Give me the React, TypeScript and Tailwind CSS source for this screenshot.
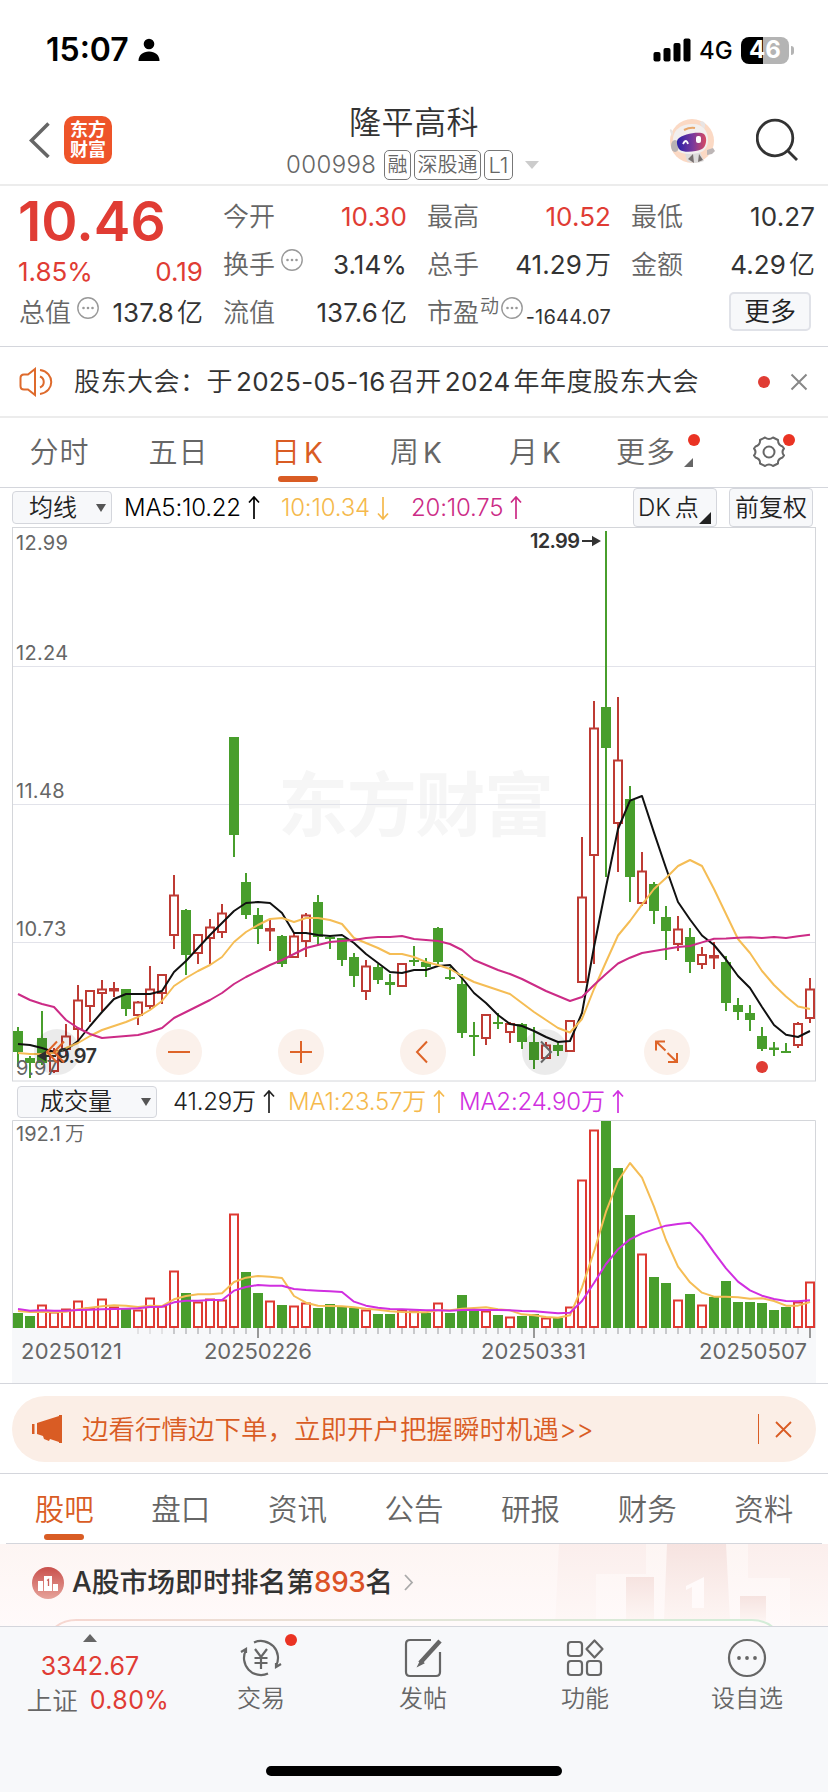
import type { ReactNode } from 'react';
import clsx from 'clsx';

type Tone = 'r' | 'g';
type Candle = [high: number, top: number, bottom: number, low: number, tone: Tone];

const RED = '#be3b34';
const GREEN = '#489e2c';

// Candles in chart space, one every 12px
const candles: Candle[] = [
  [1027, 1031, 1052, 1067, 'g'], [1056, 1058, 1063, 1078, 'g'], [1011, 1038, 1063, 1065, 'g'],
  [1048, 1051, 1071, 1073, 'r'], [1024, 1036, 1049, 1056, 'r'], [985, 1000, 1029, 1042, 'r'],
  [990, 990.5, 1006, 1022, 'r'], [980, 989, 993, 1011, 'r'], [982, 989, 991, 997, 'r'],
  [989, 989, 1009, 1016, 'g'], [1001, 1002, 1015, 1025, 'r'], [966, 989, 1006, 1009, 'r'],
  [974, 974.5, 993, 1004, 'r'], [875, 895, 935, 949, 'r'], [909, 910, 955, 975, 'g'],
  [934, 934.5, 953, 964, 'r'], [919, 927, 938, 964, 'r'], [904, 913, 932, 938, 'r'],
  [737, 737, 835, 857, 'g'], [873, 882, 915, 919, 'g'], [908, 915, 929, 944, 'g'],
  [920, 929, 931, 951, 'r'], [935, 936, 964, 967, 'g'], [932, 936, 957, 958, 'r'],
  [913, 915, 941, 957, 'r'], [895, 902, 937, 945, 'g'], [935, 937, 939, 949, 'g'],
  [938, 938, 960, 966, 'g'], [953, 957, 976, 987, 'g'], [960, 966, 991, 1000, 'r'],
  [964, 967, 980, 984, 'g'], [974, 982, 985, 995, 'g'], [963, 963.5, 986, 987, 'r'],
  [946, 960, 962, 966, 'g'], [958, 962, 967, 977, 'g'], [927, 928, 962, 965, 'g'],
  [967, 977, 979, 980, 'g'], [974, 984, 1033, 1038, 'g'], [1022, 1035, 1037, 1056, 'g'],
  [1014, 1014.5, 1038, 1045, 'r'], [1013, 1022, 1024, 1029, 'g'], [1022, 1023.5, 1032, 1043, 'r'],
  [1023, 1024, 1042, 1049, 'g'], [1027, 1042, 1060, 1069, 'g'], [1042, 1045, 1058, 1059, 'r'],
  [1043, 1045, 1051, 1056, 'g'], [1020, 1020.5, 1051, 1051, 'r'], [837, 897, 982, 983, 'r'],
  [701, 728, 855, 964, 'r'], [531, 707, 748, 877, 'g'], [697, 760, 823, 872, 'r'],
  [786, 799, 877, 902, 'g'], [852, 871, 903, 906, 'r'], [882, 884, 911, 924, 'g'],
  [906, 917, 931, 960, 'g'], [916, 929, 944, 951, 'r'], [928, 937, 962, 973, 'g'],
  [947, 954.5, 964, 969, 'r'], [942, 956, 958, 969, 'r'], [956, 962, 1003, 1011, 'g'],
  [998, 1005, 1012, 1020, 'g'], [1005, 1013, 1020, 1031, 'g'], [1027, 1036, 1049, 1051, 'g'],
  [1042, 1047.5, 1050, 1056, 'g'], [1043, 1051, 1053, 1053, 'g'], [1022, 1023.5, 1045, 1048, 'r'],
  [978, 989, 1018, 1023, 'r'],
];

const ma5 = [
  1044, 1045, 1048, 1052, 1050, 1041, 1026, 1012, 999, 994, 994, 994, 991, 972, 961, 948, 935, 923, 911, 903,
  902, 903, 913, 933, 933, 935, 936, 935, 943, 954, 963, 972, 973, 970, 970, 966, 965, 978, 993, 1003,
  1015, 1024, 1026, 1031, 1037, 1042, 1041, 1013, 947, 887, 829, 800.6, 796, 832.6, 868, 902, 919.5, 935.5, 945, 959.5,
  976, 988, 1007, 1025, 1034.7, 1037, 1031,
];
const ma10 = [
  1053, 1054, 1054, 1053, 1048, 1043, 1036, 1030, 1026, 1022, 1017, 1010, 1001, 986, 978, 971, 965, 957, 942, 932,
  925, 919, 918, 922, 918, 918, 920, 924, 938, 943, 948, 954, 954, 957, 962, 965, 969, 976, 982, 986,
  990, 994, 1003, 1012, 1020, 1028, 1032.5, 1019, 989, 962, 935.5, 921, 904.6, 889, 878, 866, 860, 866, 889, 914,
  939, 953, 971, 985, 996.5, 1006.4, 1009,
];
const ma20 = [
  994, 1000, 1004, 1007, 1020, 1028, 1034, 1038, 1037, 1036, 1035, 1032, 1028, 1018, 1012, 1006, 1000, 993, 984, 977,
  971, 965, 960, 954, 948, 945, 942, 941, 940, 938, 937, 937, 936, 939, 940, 941, 944, 950, 960, 965,
  970, 974, 979, 985, 991, 996, 1001, 997, 985, 974, 963.5, 957.7, 953, 951, 949, 947, 946, 942.4, 938.8, 938.4,
  937.7, 937.2, 938, 937, 938, 936.3, 934.7,
];

const volumes = [
  1313, 1316, 1305, 1312, 1309, 1301, 1308, 1299, 1307, 1309, 1310, 1298, 1306, 1271, 1293, 1302, 1299, 1300, 1214, 1272,
  1293, 1301, 1305, 1306, 1303, 1308, 1304, 1307, 1308, 1310, 1314, 1314, 1310, 1311, 1313, 1303, 1313, 1295, 1311, 1311,
  1315, 1317, 1316, 1314, 1318, 1318, 1307, 1180, 1130, 1121, 1168, 1215, 1254, 1277, 1283, 1300, 1294, 1305, 1297, 1281,
  1302, 1302, 1303, 1310, 1307, 1302, 1282,
];
const volumeTones = 'ggrrrrrrrgrrrrgrrrrggrgrrggggrggrrgrgggrgrggrgrrrgggrggrgrgggggggrr';
// Volume averages are kept at 3x for sub-pixel precision
const volMa1 = [
  693, 696, 695, 697, 695, 688, 683, 679, 676, 677, 681, 677, 678, 658, 648, 643, 643, 640, 606, 593,
  588, 590, 594, 648, 668, 677, 678, 679, 682, 686, 689, 694, 696, 697, 697, 691, 691, 686, 684, 682,
  688, 691, 703, 706, 711, 713, 706, 622, 515, 395, 303, 249, 293, 380, 480, 560, 607, 638, 650, 650,
  652, 656, 655, 663, 677, 677, 666,
].map((v) => 1080 + v / 3);
const volMa2 = [
  687, 692, 691, 692, 692, 690, 689, 688, 687, 686, 685, 681, 680, 667, 662, 662, 660, 660, 632, 621,
  615, 617, 617, 627, 630, 632, 634, 636, 665, 677, 683, 687, 688, 689, 691, 691, 692, 690, 689, 690,
  690, 691, 693, 694, 697, 700, 698, 663, 609, 552, 508, 478, 460, 448, 437, 432, 428, 466, 517, 565,
  605, 631, 647, 657, 663, 664, 661,
].map((v) => 1080 + v / 3);

const cx = (i: number) => 18 + i * 12;
const toPoints = (ys: number[]) => ys.map((y, i) => `${cx(i)},${y}`).join(' ');

function Line({ values, color }: { values: number[]; color: string }) {
  return <polyline points={toPoints(values)} fill="none" stroke={color} strokeWidth="2" strokeLinejoin="round" />;
}

function StatusBar() {
  return (
    <div className="flex h-[100px] items-center pl-[46px] pr-[34px] text-black">
      <span className="w-[92px] text-[32px] font-semibold leading-none">15:07</span>
      <svg width="22" height="24" viewBox="0 0 22 24">
        <circle cx="11" cy="6" r="5.3" />
        <path d="M0.5 23c0-6 4.5-9.500 10.500-9.500s10.500 3.500 10.500 9.500z" />
      </svg>
      <svg className="ml-auto" width="38" height="24" viewBox="0 0 38 24">
        <rect x="0.500" y="14" width="7" height="9.500" rx="2" />
        <rect x="10.500" y="10" width="7" height="13.500" rx="2" />
        <rect x="20.500" y="5" width="7" height="18.500" rx="2" />
        <rect x="30.500" y="0.500" width="7" height="23" rx="2" />
      </svg>
      <span className="ml-[8px] w-[42px] pt-[2px] text-[24px] font-medium leading-none">4G</span>
      <div className="flex h-[27px] w-[48px] items-center justify-center rounded-[8px] bg-[linear-gradient(90deg,#000_46%,#b4b4b4_46%)] text-[24px] font-bold leading-none text-white">
        46
      </div>
      <div className="ml-[2px] h-[9px] w-[3px] rounded-r-full bg-[#b4b4b4]" />
    </div>
  );
}

function Robot() {
  return (
    <svg width="48" height="48" viewBox="0 0 48 48">
      <defs>
        <linearGradient id="visor" x1="0" x2="1">
          <stop offset="0" stopColor="#2a1fa8" />
          <stop offset="0.55" stopColor="#7a3a9c" />
          <stop offset="1" stopColor="#d84a62" />
        </linearGradient>
      </defs>
      <circle cx="24" cy="24" r="22" fill="#fbd9c4" />
      <path d="M17 36l15-1 4 9q-10 4-17 0z" fill="#dedcdc" />
      <path d="M20 42l5-5 1 9zM31 37l4 6-5 2z" fill="#77706f" />
      <path d="M5 16c0-4-4-5-3-2l2 6zM32 6c0-3 6-2 5 3l-1 4z" fill="#e8e4e3" />
      <path d="M5 25C4 12 14 7 25 7c10 0 15 7 15 16 0 11-8 14-18 14C11 37 6 33 5 25z" fill="#f2efee" />
      <ellipse cx="7" cy="29" rx="4" ry="6" fill="#b9b3b3" />
      <path d="M39 33l6-2 2 3-3 3-5 1z" fill="#bdb6b6" />
      <path d="M10 22c4-5 22-8 26-5 4 4 2 13-2 15-6 3-18 4-22 1-3-3-4-9-2-11z" fill="url(#visor)" />
      <path d="M15 27q3-6 5 0" fill="none" stroke="#fff" strokeWidth="1.800" />
      <rect x="28" y="19" width="5" height="7" rx="2" fill="#fff" />
      <path d="M16 13q6-3 11-2" stroke="#e8a66a" strokeWidth="2" fill="none" />
    </svg>
  );
}

function Tag({ children, className }: { children: ReactNode; className: string }) {
  return (
    <span className={clsx('flex h-[30px] items-center justify-center rounded-[5px] border border-[#777] text-[20px] leading-none', className)}>
      {children}
    </span>
  );
}

function Header() {
  return (
    <header className="flex h-[86px] border-b-2 border-[#ececec] pl-[28px] pr-[28px]">
      <div className="flex w-[240px] items-start pt-[16px]">
        <svg className="mt-[6px]" width="24" height="36" viewBox="0 0 24 36" fill="none" stroke="#666" strokeWidth="3.500">
          <path d="M20.500 1.500L3.500 18.500 20.500 35" />
        </svg>
        <div className="ml-[12px] flex h-[48px] w-[48px] flex-col items-center justify-center rounded-[10px] bg-[#ee5429] text-[18px] font-bold leading-[20px] text-white">
          <span>东方</span>
          <span>财富</span>
        </div>
      </div>
      <div className="flex flex-1 flex-col items-start">
        <h1 className="ml-[81px] mt-[7px] text-[32px] font-[350] leading-[32px] tracking-[0.5px] text-[#333]">隆平高科</h1>
        <div className="mt-[11px] flex items-center pl-[18px] font-[350] text-[#666]">
          <span className="w-[98px] text-[24px] leading-none tracking-[0.4px]">000998</span>
          <Tag className="w-[27px]">融</Tag>
          <Tag className="ml-[3px] w-[67px]">深股通</Tag>
          <Tag className="ml-[3px] w-[29px] text-[22px]">L1</Tag>
          <span className="ml-[12px] border-x-[7px] border-t-[8px] border-x-transparent border-t-[#ccc]" />
        </div>
      </div>
      <div className="flex items-start pt-[17px]">
        <Robot />
        <svg className="ml-[40px]" width="44" height="44" viewBox="0 0 44 44" fill="none" stroke="#333" strokeWidth="2.800">
          <circle cx="19" cy="21" r="17.800" />
          <path d="M31.500 33.500L41 43" />
        </svg>
      </div>
    </header>
  );
}

function Dots() {
  return (
    <svg className="mb-[10px] ml-[6px] shrink-0" width="22" height="22" viewBox="0 0 22 22" fill="#999">
      <circle cx="11" cy="11" r="10.200" fill="none" stroke="#999" strokeWidth="1.400" />
      <circle cx="6.500" cy="11" r="1.300" />
      <circle cx="11" cy="11" r="1.300" />
      <circle cx="15.500" cy="11" r="1.300" />
    </svg>
  );
}

function Stat({ label, value, unit, up, info }: { label: string; value: string; unit?: string; up?: boolean; info?: boolean }) {
  return (
    <div className="flex h-[48px] items-center whitespace-nowrap text-[26px] font-[350] leading-none">
      <span className="text-[#666]">{label}</span>
      {info && <Dots />}
      <span className={clsx('ml-auto', up ? 'text-[#e03c34]' : 'text-[#333]')}>
        <span className="font-[380] tracking-[0.1px]">{value}</span>
        {unit && <span className="ml-[3px]">{unit}</span>}
      </span>
    </div>
  );
}

function Quote() {
  return (
    <section className="grid h-[161px] grid-cols-4 gap-x-[20px] border-b border-[#d4d6dc] pl-[19px] pr-[13px] pt-[7px]">
      <div>
        <div className="-ml-px h-[60px] pt-[4px] text-[55px] font-semibold leading-[48px] tracking-[0.1px] text-[#e03c34]">10.46</div>
        <div className="-ml-px flex h-[38px] items-center justify-between text-[26px] font-[380] leading-none text-[#e03c34]">
          <span>1.85%</span>
          <span>0.19</span>
        </div>
        <div className="-mt-[2px]">
          <Stat label="总值" value="137.8" unit="亿" info />
        </div>
      </div>
      <div>
        <Stat label="今开" value="10.30" up />
        <Stat label="换手" value="3.14%" info />
        <Stat label="流值" value="137.6" unit="亿" />
      </div>
      <div>
        <Stat label="最高" value="10.52" up />
        <Stat label="总手" value="41.29" unit="万" />
        <div className="flex h-[48px] items-center whitespace-nowrap text-[26px] font-[350] leading-none">
          <span className="text-[#666]">市盈</span>
          <span className="mb-[14px] ml-px text-[19px] text-[#666]">动</span>
          <span className="-ml-[4px] flex">
            <Dots />
          </span>
          <span className="ml-auto mt-[8px] text-[20px] font-[380] tracking-[0.2px] text-[#333]">-1644.07</span>
        </div>
      </div>
      <div>
        <Stat label="最低" value="10.27" />
        <Stat label="金额" value="4.29" unit="亿" />
        <div className="flex h-[44px] items-center justify-end pr-[4px]">
          <button className="h-[39px] w-[82px] rounded-[5px] border-2 border-[#e0e2e8] bg-[#f7f8fa] pt-px text-[26px] font-[350] leading-none text-[#222]">更多</button>
        </div>
      </div>
    </section>
  );
}

function Notice() {
  return (
    <section className="flex h-[71px] items-center border-b-2 border-[#ececec] pl-[19px] pr-[20px]">
      <svg width="36" height="30" viewBox="0 0 36 30" fill="none" stroke="#de6a2c" strokeWidth="2">
        <path d="M16 2v26l-7-5.500H5q-3.500 0-3.500-3.500V11q0-3.500 3.500-3.500h4z" />
        <path d="M21 9.500c5 2 5 9 0 11" />
        <path d="M21 3c15 2 15 22 0 24" />
      </svg>
      <p className="ml-[19px] whitespace-nowrap text-[26px] font-[350] leading-none tracking-[0.5px] text-[#333]">
        股东大会：于<span className="mx-[3px] font-[380] tracking-[0.3px]">2025-05-16</span>召开<span className="mx-[3px] font-[380] tracking-[0.3px]">2024</span>年年度股东大会
      </p>
      <span className="ml-auto h-3 w-3 rounded-full bg-[#e03c34]" />
      <svg className="ml-[20px]" width="18" height="18" viewBox="0 0 18 18" stroke="#888" strokeWidth="2">
        <path d="M1.500 1.500l15 15M16.500 1.500l-15 15" />
      </svg>
    </section>
  );
}

function PeriodTabs() {
  const tabs = ['分时', '五日', '日K', '周K', '月K'];
  return (
    <nav className="flex h-[70px] border-b border-[#d4d6dc] text-[29px] font-[350] leading-none tracking-[1px] text-[#666]">
      {tabs.map((tab) => (
        <div key={tab} className={clsx('flex w-[119px] flex-col items-center pt-[20px]', tab === '日K' && 'text-[#d95c24]')}>
          <span className="h-[38px]">
            {tab[0]}
            <span className={clsx(tab[1] === 'K' && 'ml-[3px] text-[28px] font-[400]')}>{tab[1]}</span>
          </span>
          {tab === '日K' && <span className="h-[6px] w-[40px] rounded-full bg-[#d95c24]" />}
        </div>
      ))}
      <div className="relative flex w-[110px] pl-[21px] pt-[20px]">
        更多
        <span className="absolute left-[93px] top-[16px] h-3 w-3 rounded-full bg-[#ea3323]" />
        <svg className="absolute left-[89px] top-[40px]" width="9" height="9" fill="#666">
          <path d="M9 0v9H0z" />
        </svg>
      </div>
      <div className="relative flex flex-1 pl-[47px] pt-[17px]">
        <svg width="34" height="34" viewBox="0 0 34 34" fill="none" stroke="#666" strokeWidth="2">
          <path d="M13 2.500q4 3 8 0l5 2.500q0 5 4.500 6.500l1.500 2q-3 3.500 0 7l-1.500 2q-5 1.500-4.500 6l-5 2.500q-4-3-8 0l-5-2.500q0.500-4.500-4.500-6l-1.500-2q3-3.500 0-7l1.500-2q5-1.500 4.500-6.500z" strokeLinejoin="round" />
          <circle cx="17" cy="17" r="5.500" />
        </svg>
        <span className="absolute left-[78px] top-[16px] h-3 w-3 rounded-full bg-[#ea3323]" />
      </div>
    </nav>
  );
}

function Arrow({ down }: { down?: boolean }) {
  return (
    <svg className={clsx('ml-[7px] inline-block', down && 'rotate-180')} width="12" height="24" viewBox="0 0 12 24" fill="none" stroke="currentColor" strokeWidth="1.700">
      <path d="M6 1v22M1 6.500L6 1l5 5.500" />
    </svg>
  );
}

function Indicator({ children, className, down }: { children: ReactNode; className: string; down?: boolean }) {
  return (
    <span className={clsx('flex shrink-0 items-center whitespace-nowrap text-[24px] font-[350] leading-none tracking-[-0.2px]', className)}>
      {children}
      <Arrow down={down} />
    </span>
  );
}

function PriceIndicators() {
  return (
    <div className="flex h-[39px] items-center pl-[12px] pr-[15px]">
      <button className="flex h-[33px] w-[100px] items-center justify-between rounded-[4px] border border-[#d4d6dc] bg-[#f7f8fa] pl-[16px] pr-[5px] text-[24px] font-[350] leading-none text-[#222]">
        均线
        <span className="border-x-[5px] border-t-[8px] border-x-transparent border-t-[#555]" />
      </button>
      <Indicator className="ml-[12px] w-[157px] text-black">MA5:10.22</Indicator>
      <Indicator className="w-[130px] text-[#f5b94c]" down>10:10.34</Indicator>
      <Indicator className="text-[#cc2b86]">20:10.75</Indicator>
      <button className="relative ml-auto h-[39px] w-[84px] rounded-[4px] border border-[#d4d6dc] bg-[#f7f8fa] pl-[4px] pt-px text-left text-[24px] font-[350] leading-none text-[#222]">
        DK<span className="ml-[4px]">点</span>
        <svg className="absolute bottom-[2px] right-[5px]" width="12" height="12" fill="#222">
          <path d="M12 0v12H0z" />
        </svg>
      </button>
      <button className="ml-[12px] h-[39px] w-[84px] whitespace-nowrap rounded-[4px] border border-[#d4d6dc] bg-[#f7f8fa] pt-px text-[24px] font-[350] leading-none text-[#222]">前复权</button>
    </div>
  );
}

function PriceChart() {
  const labels: [string, number][] = [['12.99', 550], ['12.24', 660], ['11.48', 798], ['10.73', 936], ['9.97', 1075]];
  return (
    <svg className="block" width="828" height="555" viewBox="0 527 828 555">
      <text x="278" y="831" fontSize="70" fontWeight="700" fill="#f6f6f6" textLength="276">东方财富</text>
      <g stroke="#e2e3ea" strokeWidth="1">
        <path d="M13 666.500H815M13 804.500H815M13 942.500H815" />
      </g>
      <rect x="12.500" y="527.500" width="803" height="553.500" fill="none" stroke="#d4d6da" />
      {candles.map(([high, top, bottom, low, tone], i) => {
        const x = cx(i);
        const thin = bottom - top < 3;
        return (
          <g key={i}>
            {tone === 'g' ? (
              <>
                <path d={`M${x} ${high}V${low}`} stroke={GREEN} strokeWidth="2" />
                <rect x={x - 5} y={top} width="10" height={Math.max(bottom - top, 2)} fill={GREEN} />
              </>
            ) : (
              <>
                <path d={`M${x} ${high}V${top}M${x} ${bottom}V${low}`} stroke={RED} strokeWidth="2" />
                <rect x={x - 4} y={top + (thin ? 0 : 0.500)} width="8" height={thin ? 1.500 : bottom - top - 0.500} fill="none" stroke={RED} strokeWidth="2" />
              </>
            )}
          </g>
        );
      })}
      <Line values={ma5} color="#111" />
      <Line values={ma10} color="#f5bd55" />
      <Line values={ma20} color="#cc2b86" />
      <circle cx="762" cy="1067" r="6" fill="#e03c34" />
      <g fill="#333" fontSize="20" fontWeight="600">
        <text x="530" y="548" textLength="50">12.99</text>
        <text x="57" y="1063" textLength="40">9.97</text>
      </g>
      <path d="M582 541h15M593 537.500l6 3.500-6 3.500z" stroke="#333" strokeWidth="2" fill="#333" />
      <path d="M56 1056H41M45 1052.500l-6 3.500 6 3.500z" stroke="#333" strokeWidth="2" fill="#333" />
      <g fill="#666" fontSize="20" fontWeight="380">
        {labels.map(([label, y]) => (
          <text key={label} x="16" y={y} letterSpacing="0.300">{label}</text>
        ))}
      </g>
      <g fill="#000" fillOpacity="0.080">
        <circle cx="57" cy="1052" r="23" />
        <circle cx="545" cy="1052" r="23" />
      </g>
      <g fill="#fbf1eb">
        <circle cx="179" cy="1052" r="23" />
        <circle cx="301" cy="1052" r="23" />
        <circle cx="423" cy="1052" r="23" />
        <circle cx="667" cy="1052" r="23" />
      </g>
      <g fill="none" stroke="#de6428" strokeWidth="2">
        <path d="M57 1041.500L47 1052l10 10.500M64 1041.500L54 1052l10 10.500" />
        <path d="M168 1052h22M290 1052h22M301 1041v22" />
        <path d="M427 1041.500L417 1052l10 10.500" />
        <path d="M665 1041.500h-9v9M656 1041.500l9.500 9M668 1062h9v-9M677 1062l-9.500-9" />
      </g>
      <path d="M541 1041.500l10 10.500-10 10.500" fill="none" stroke="#666" strokeWidth="2" />
    </svg>
  );
}

function VolumeIndicators() {
  return (
    <div className="flex h-[38px] items-center pl-[17px] pt-[2px]">
      <button className="flex h-[32px] w-[140px] items-center justify-between rounded-[4px] border border-[#d4d6dc] bg-[#f7f8fa] pl-[22px] pr-[5px] text-[24px] font-[350] leading-none text-[#222]">
        成交量
        <span className="border-x-[5px] border-t-[8px] border-x-transparent border-t-[#555]" />
      </button>
      <Indicator className="ml-[16px] w-[115px] text-[#222]">41.29万</Indicator>
      <Indicator className="w-[171px] text-[#f5b94c]">MA1:23.57万</Indicator>
      <Indicator className="text-[#d02fe0]">MA2:24.90万</Indicator>
    </div>
  );
}

function VolumeChart() {
  return (
    <svg className="block" width="828" height="263" viewBox="0 1120 828 263">
      <rect x="12" y="1328" width="804" height="55" fill="#f7f8fa" />
      <path d="M12.500 1328V1120.500H815.500V1328" fill="none" stroke="#d4d6da" />
      {volumes.map((top, i) =>
        volumeTones[i] === 'g' ? (
          <rect key={i} x={cx(i) - 5} y={top} width="10" height={1328 - top} fill={GREEN} />
        ) : (
          <rect key={i} x={cx(i) - 4} y={top + 0.500} width="8" height={1326.500 - top} fill="#fff" stroke="#de3a32" strokeWidth="2" />
        ),
      )}
      <Line values={volMa1} color="#f5bd55" />
      <Line values={volMa2} color="#d02fe0" />
      {volumes.map((_, i) => {
        const major = i === 20 || i === 43 || i === 66;
        if (i < 10) return null;
        return <path key={i} d={`M${cx(i)} 1328V${major ? 1338 : 1334}`} stroke={major ? '#999' : i < 13 ? '#e2e2e4' : '#c8c9cc'} strokeWidth="2" />;
      })}
      <g fill="#666" fontSize="22" fontWeight="380">
        <text x="16" y="1141" fontSize="20">192.1<tspan dx="4" fontWeight="350">万</tspan></text>
        <text x="21" y="1359" textLength="101">20250121</text>
        <text x="204" y="1359" textLength="108">20250226</text>
        <text x="481" y="1359" textLength="105">20250331</text>
        <text x="699" y="1359" textLength="108">20250507</text>
      </g>
    </svg>
  );
}

function Promo() {
  return (
    <section className="border-y border-[#d4d6dc] px-[12px] pb-[11px] pt-[12px]">
      <div className="flex h-[66px] items-center rounded-full bg-[#fbeee6] pl-[20px] pr-[24px] text-[#d95c24]">
        <svg width="31" height="28" viewBox="0 0 31 28" fill="currentColor">
          <path d="M0 9h2.500v10H0zM5 8L27 1V27l-9-3-1 2-5-2-1-3-6-2z" />
          <path d="M27 0h3v28h-3z" />
        </svg>
        <span className="ml-[19px] text-[26.500px] font-[350] leading-none">边看行情边下单，立即开户把握瞬时机遇&gt;&gt;</span>
        <span className="ml-auto h-[30px] w-px bg-[#d95c24]" />
        <svg className="ml-[16px]" width="17" height="17" viewBox="0 0 17 17" stroke="currentColor" strokeWidth="1.800">
          <path d="M1 1l15 15M16 1L1 16" />
        </svg>
      </div>
    </section>
  );
}

function SectionTabs() {
  const tabs = ['股吧', '盘口', '资讯', '公告', '研报', '财务', '资料'];
  return (
    <nav className="mx-[6px] grid h-[70px] grid-cols-7 border-b border-[#d4d6dc] text-[29.500px] font-[350] leading-none text-[#666]">
      {tabs.map((tab, i) => (
        <div key={tab} className={clsx('flex flex-col items-center pt-[21px]', i === 0 && 'text-[#d95c24]')}>
          <span className="h-[39px]">{tab}</span>
          {i === 0 && <span className="h-[6px] w-[40px] rounded-full bg-[#d95c24]" />}
        </div>
      ))}
    </nav>
  );
}

function Ranking() {
  return (
    <section className="relative h-[82px] overflow-hidden bg-gradient-to-b from-[#fdf5f3] to-[#fffafa]">
      <svg className="absolute inset-0" width="828" height="82" viewBox="0 0 828 82">
        <defs>
          <linearGradient id="podium" x1="0" x2="0" y1="0" y2="1">
            <stop offset="0" stopColor="#f6e3e0" />
            <stop offset="1" stopColor="#fdf5f3" />
          </linearGradient>
          <linearGradient id="backdrop" x1="0" x2="0" y1="0" y2="1">
            <stop offset="0" stopColor="#fbeeec" />
            <stop offset="1" stopColor="#fef8f7" />
          </linearGradient>
          <linearGradient id="frame" x1="0" x2="1">
            <stop offset="0" stopColor="#f7d6d0" />
            <stop offset="0.500" stopColor="#e3e5d8" />
            <stop offset="1" stopColor="#d3edd8" />
          </linearGradient>
        </defs>
        <path d="M559 0h87v30h-50v52h-41zM748 0h80v82h-38V34h-42z" fill="url(#backdrop)" />
        <path d="M667 0h59l4 76h-66z" fill="url(#podium)" />
        <path d="M626 33h28v42h-28z" fill="url(#podium)" />
        <path d="M740 52h26v25h-26z" fill="url(#podium)" />
        <path d="M686 42l18-9v31h-12V43l-6 3z" fill="#fffafa" />
        <rect x="44" y="76" width="740" height="60" rx="32" fill="#fffafa" stroke="url(#frame)" strokeWidth="2" />
      </svg>
      <div className="relative flex h-[77px] items-center pl-[32px] text-[27.800px] font-medium leading-none text-[#333]">
        <svg width="32" height="32" viewBox="0 0 32 32">
          <defs>
            <linearGradient id="medal" x1="0" x2="0" y1="0" y2="1">
              <stop offset="0" stopColor="#c9504c" />
              <stop offset="1" stopColor="#e6a39b" />
            </linearGradient>
          </defs>
          <circle cx="16" cy="16" r="16" fill="url(#medal)" />
          <path d="M6 14h5v10H6zM12 9h8v15h-8zM21 17h5v7h-5z" fill="#fff" />
          <path d="M15 13.500l1.500-1V19" fill="none" stroke="#c9605a" strokeWidth="1.300" />
        </svg>
        <span className="ml-[8px] whitespace-nowrap">
          A股市场即时排名第<span className="tracking-[-0.400px] text-[#dc5226]">893</span>名
        </span>
        <svg className="ml-[11px]" width="10" height="17" viewBox="0 0 10 17" fill="none" stroke="#aaa" strokeWidth="1.800">
          <path d="M1 1l7 7.500L1 16" />
        </svg>
      </div>
    </section>
  );
}

function NavItem({ label, children, badge }: { label: string; children: ReactNode; badge?: boolean }) {
  return (
    <div className="relative flex w-[162px] flex-col items-center pt-[11px]">
      <svg width="42" height="40" viewBox="0 0 42 40" fill="none" stroke="#666" strokeWidth="2.200">
        {children}
      </svg>
      {badge && <span className="absolute left-[105px] top-[7px] h-3 w-3 rounded-full bg-[#ea3323]" />}
      <span className="mt-[9px] text-[24px] font-[350] leading-none text-[#666]">{label}</span>
    </div>
  );
}

function BottomBar() {
  return (
    <footer className="flex h-[166px] flex-col border-t border-[#d4d6dc] bg-[#f7f8fa]">
      <div className="flex h-[139px]">
        <div className="flex w-[180px] flex-col items-center text-[25px] font-[380] leading-none text-[#e03c34]">
          <span className="mt-[7px] border-x-[7px] border-b-[8px] border-x-transparent border-b-[#666]" />
          <span className="mt-[12px]">3342.67</span>
          <span className="mt-[9px] flex pl-[16px]">
            <span className="mr-[12px] text-[25.500px] font-[350] text-[#666]">上证</span>
            <span className="tracking-[0.400px]">0.80%</span>
          </span>
        </div>
        <NavItem label="交易" badge>
          <path d="M14 4.500A17 17 0 0 1 36 28M28 35.500A17 17 0 0 1 6 12M1 14l5-3v4M36 25v4l5-3" />
          <path d="M15 11l6 8 6-8M21 19v12M14.500 20h13M14.500 25h13" />
        </NavItem>
        <NavItem label="发帖">
          <path d="M29 2H8q-4 0-4 4v28q0 4 4 4h26q4 0 4-4V14" />
          <path d="M38 3l-20 22" strokeWidth="4.500" />
          <path d="M19 23l-2 4 4-2z" fill="#666" />
        </NavItem>
        <NavItem label="功能">
          <rect x="4" y="4" width="14" height="14" rx="3" />
          <rect x="4" y="23" width="14" height="14" rx="3" />
          <rect x="23" y="23" width="14" height="14" rx="3" />
          <path d="M30.500 2.500l8 8.500-8 8.500-8-8.500z" strokeLinejoin="round" />
        </NavItem>
        <NavItem label="设自选">
          <circle cx="21" cy="20" r="18" />
          <g fill="#666" stroke="none">
            <circle cx="13" cy="20" r="1.900" />
            <circle cx="21" cy="20" r="1.900" />
            <circle cx="29" cy="20" r="1.900" />
          </g>
        </NavItem>
      </div>
      <div className="mx-auto h-[10px] w-[296px] rounded-full bg-black" />
    </footer>
  );
}

export default function App() {
  return (
    <main className="flex w-[828px] flex-col overflow-hidden bg-white font-['Inter','Noto_Sans_CJK_SC',sans-serif]">
      <StatusBar />
      <Header />
      <Quote />
      <Notice />
      <PeriodTabs />
      <PriceIndicators />
      <PriceChart />
      <VolumeIndicators />
      <VolumeChart />
      <Promo />
      <SectionTabs />
      <Ranking />
      <BottomBar />
    </main>
  );
}
